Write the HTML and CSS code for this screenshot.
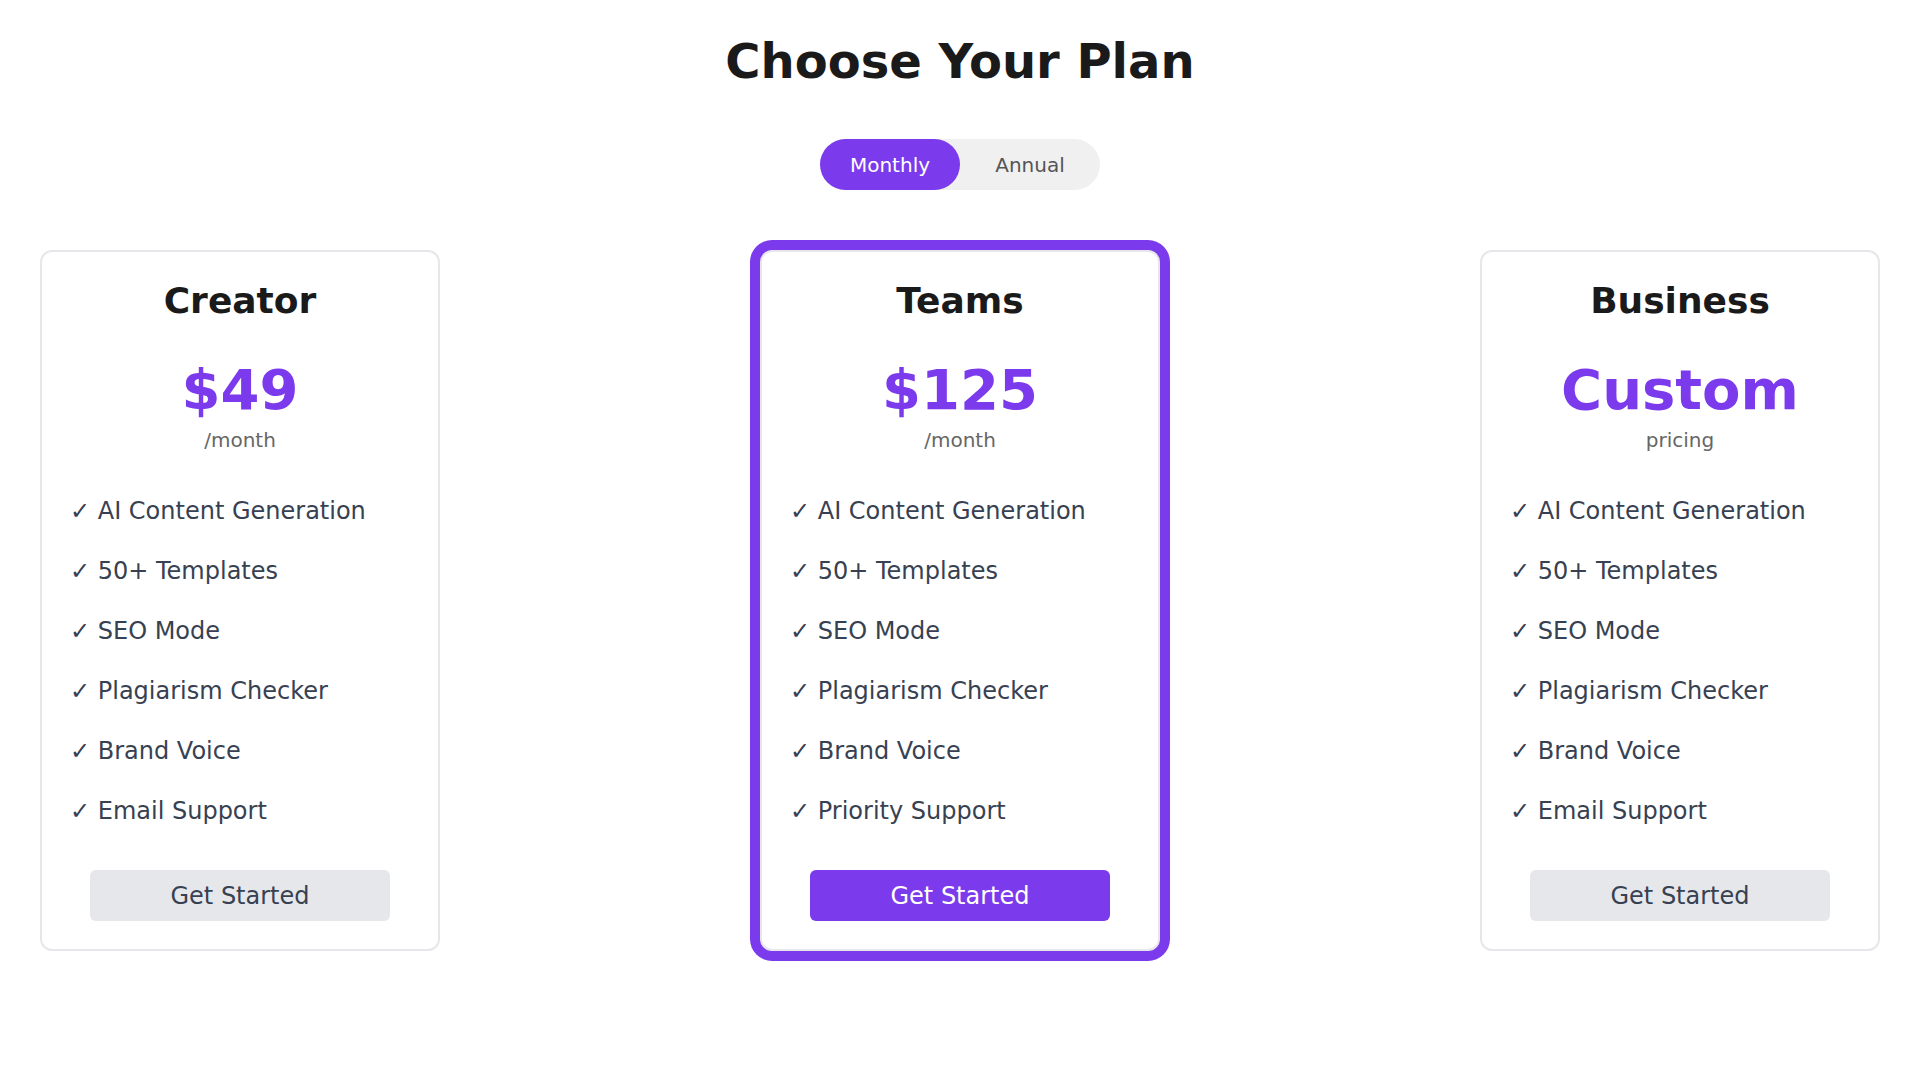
FILE: index.html
```html
<!DOCTYPE html>
<html lang="en">
<head>
<meta charset="utf-8">
<title>Choose Your Plan</title>
<link rel="stylesheet" href="styles.css">
</head>
<body>
<main class="page">
  <h1 class="title">Choose Your Plan</h1>
  <div class="toggle">
    <button class="toggle-btn active">Monthly</button>
    <button class="toggle-btn">Annual</button>
  </div>
  <section class="plans">
    <article class="card">
      <h3 class="plan-name">Creator</h3>
      <div class="price">$49</div>
      <div class="period">/month</div>
      <ul class="features">
        <li><span class="check">✓</span> AI Content Generation</li>
        <li><span class="check">✓</span> 50+ Templates</li>
        <li><span class="check">✓</span> SEO Mode</li>
        <li><span class="check">✓</span> Plagiarism Checker</li>
        <li><span class="check">✓</span> Brand Voice</li>
        <li><span class="check">✓</span> Email Support</li>
      </ul>
      <button class="cta">Get Started</button>
    </article>
    <article class="card featured">
      <h3 class="plan-name">Teams</h3>
      <div class="price">$125</div>
      <div class="period">/month</div>
      <ul class="features">
        <li><span class="check">✓</span> AI Content Generation</li>
        <li><span class="check">✓</span> 50+ Templates</li>
        <li><span class="check">✓</span> SEO Mode</li>
        <li><span class="check">✓</span> Plagiarism Checker</li>
        <li><span class="check">✓</span> Brand Voice</li>
        <li><span class="check">✓</span> Priority Support</li>
      </ul>
      <button class="cta cta-primary">Get Started</button>
    </article>
    <article class="card">
      <h3 class="plan-name">Business</h3>
      <div class="price">Custom</div>
      <div class="period">pricing</div>
      <ul class="features">
        <li><span class="check">✓</span> AI Content Generation</li>
        <li><span class="check">✓</span> 50+ Templates</li>
        <li><span class="check">✓</span> SEO Mode</li>
        <li><span class="check">✓</span> Plagiarism Checker</li>
        <li><span class="check">✓</span> Brand Voice</li>
        <li><span class="check">✓</span> Email Support</li>
      </ul>
      <button class="cta">Get Started</button>
    </article>
  </section>
</main>
</body>
</html>
```

FILE: styles.css
```css
* {
  box-sizing: border-box;
}

html, body {
  margin: 0;
  padding: 0;
  background: #ffffff;
}

body {
  font-family: "DejaVu Sans", "Noto Sans", sans-serif;
  color: #1a1a1a;
}

.page {
  display: flex;
  flex-direction: column;
  align-items: center;
  padding-top: 33px;
  padding-bottom: 100px;
}

.title {
  margin: 0 0 50px;
  font-size: 48px;
  font-weight: 700;
  line-height: 56px;
  color: #1a1a1a;
}

.toggle {
  display: flex;
  width: 280px;
  height: 51px;
  background: #f0f0f0;
  border-radius: 9999px;
}

.toggle-btn {
  flex: 1;
  border: none;
  background: transparent;
  border-radius: 9999px;
  font-family: inherit;
  font-size: 20px;
  color: #555555;
  padding: 0;
  cursor: pointer;
}

.toggle-btn.active {
  background: #7c3aed;
  color: #ffffff;
}

.plans {
  align-self: stretch;
  display: flex;
  justify-content: space-between;
  align-items: flex-start;
  padding: 0 40px;
  margin-top: 60px;
}

.card {
  width: 400px;
  border: 2px solid #e5e7eb;
  border-radius: 12px;
  padding: 27px 28px 28px;
  display: flex;
  flex-direction: column;
  align-items: center;
  background: #ffffff;
}

.card.featured {
  box-shadow: 0 0 0 10px #7c3aed;
}

.plan-name {
  margin: 0;
  font-size: 36px;
  line-height: 44px;
  font-weight: 700;
  color: #1a1a1a;
}

.price {
  margin-top: 39px;
  font-size: 56px;
  line-height: 56px;
  font-weight: 700;
  color: #7c3aed;
}

.period {
  margin-top: 7px;
  font-size: 20px;
  line-height: 30px;
  color: #666666;
}

.features {
  list-style: none;
  margin: 26px 0 0;
  padding: 0;
  align-self: stretch;
}

.features li {
  font-size: 24px;
  line-height: 36px;
  padding: 12px 0;
  color: #374151;
}

.check {
  color: #374151;
}

.cta {
  margin-top: 29px;
  width: 300px;
  height: 51px;
  border: none;
  border-radius: 6px;
  background: #e5e7eb;
  color: #374151;
  font-family: inherit;
  font-size: 24px;
  cursor: pointer;
}

.cta-primary {
  background: #7c3aed;
  color: #ffffff;
}
```
